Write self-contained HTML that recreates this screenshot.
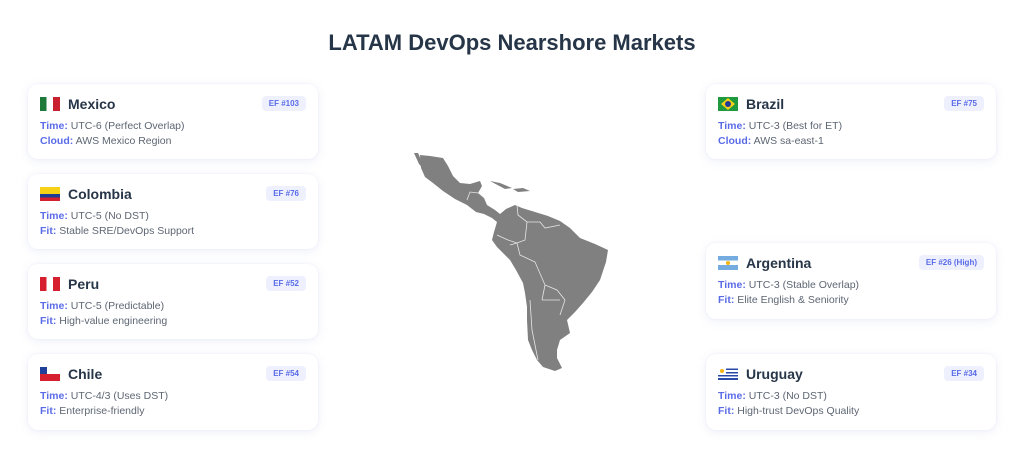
<!DOCTYPE html>
<html><head><style>
*{margin:0;padding:0;box-sizing:border-box}
body{width:1024px;height:457px;background:#fff;font-family:"Liberation Sans",sans-serif;position:relative;overflow:hidden}
h1{position:absolute;top:30px;left:0;width:1024px;text-align:center;font-size:22px;font-weight:bold;color:#263547}
.card{position:absolute;width:290px;background:#fff;border-radius:10px;box-shadow:0 2px 10px rgba(90,100,200,.10),0 0 2px rgba(90,100,200,.08)}
.hd{position:absolute;left:12px;top:12px;display:flex;align-items:center}
.flag{width:20px;height:14px;margin-right:8px;position:relative;overflow:hidden}
.nm{font-weight:bold;font-size:14px;color:#263547}
.badge{position:absolute;right:12px;top:12px;background:#eef1fd;color:#5a6be8;font-size:8px;font-weight:bold;padding:3px 7px;border-radius:4px}
.ln{position:absolute;left:12px;font-size:10.5px;color:#5d6673}
.ln b{color:#5a6be8}
.l1{top:36px}.l2{top:51px}
</style></head><body>
<h1>LATAM DevOps Nearshore Markets</h1>

<div class="card" style="left:28px;top:84px;height:75px">
<div class="hd"><div class="flag" style="background:linear-gradient(90deg,#1f7a3a 33%,#fff 33% 66%,#c8202f 66%)"></div><span class="nm">Mexico</span></div>
<div class="badge">EF #103</div>
<div class="ln l1"><b>Time:</b> UTC-6 (Perfect Overlap)</div><div class="ln l2"><b>Cloud:</b> AWS Mexico Region</div></div>

<div class="card" style="left:28px;top:174px;height:75px">
<div class="hd"><div class="flag" style="background:linear-gradient(#f7d116 50%,#1e3b96 50% 75%,#d3202c 75%)"></div><span class="nm">Colombia</span></div>
<div class="badge">EF #76</div>
<div class="ln l1"><b>Time:</b> UTC-5 (No DST)</div><div class="ln l2"><b>Fit:</b> Stable SRE/DevOps Support</div></div>

<div class="card" style="left:28px;top:264px;height:75px">
<div class="hd"><div class="flag" style="background:linear-gradient(90deg,#d7202f 33%,#fff 33% 66%,#d7202f 66%)"></div><span class="nm">Peru</span></div>
<div class="badge">EF #52</div>
<div class="ln l1"><b>Time:</b> UTC-5 (Predictable)</div><div class="ln l2"><b>Fit:</b> High-value engineering</div></div>

<div class="card" style="left:28px;top:354px;height:76px">
<div class="hd"><div class="flag" style="background:linear-gradient(#fff 50%,#d7202f 50%)"><div style="position:absolute;left:0;top:0;width:7px;height:7px;background:#1f3f9a"></div></div><span class="nm">Chile</span></div>
<div class="badge">EF #54</div>
<div class="ln l1"><b>Time:</b> UTC-4/3 (Uses DST)</div><div class="ln l2"><b>Fit:</b> Enterprise-friendly</div></div>

<div class="card" style="left:706px;top:84px;height:75px">
<div class="hd"><div class="flag" style="background:#1f9a3f"><div style="position:absolute;left:3px;top:1px;width:14px;height:12px;background:#f7d116;clip-path:polygon(50% 0,100% 50%,50% 100%,0 50%)"></div><div style="position:absolute;left:7px;top:4px;width:6px;height:6px;border-radius:50%;background:#1e3b96"></div></div><span class="nm">Brazil</span></div>
<div class="badge">EF #75</div>
<div class="ln l1"><b>Time:</b> UTC-3 (Best for ET)</div><div class="ln l2"><b>Cloud:</b> AWS sa-east-1</div></div>

<div class="card" style="left:706px;top:243px;height:76px">
<div class="hd"><div class="flag" style="background:linear-gradient(#74acdf 33%,#fff 33% 66%,#74acdf 66%)"><div style="position:absolute;left:8px;top:5px;width:4px;height:4px;border-radius:50%;background:#f6b40e"></div></div><span class="nm">Argentina</span></div>
<div class="badge">EF #26 (High)</div>
<div class="ln l1"><b>Time:</b> UTC-3 (Stable Overlap)</div><div class="ln l2"><b>Fit:</b> Elite English &amp; Seniority</div></div>

<div class="card" style="left:706px;top:354px;height:76px">
<div class="hd"><div class="flag" style="background:repeating-linear-gradient(#fff 0 1.6px,#2a4aa8 1.6px 3.2px)"><div style="position:absolute;left:0;top:0;width:8px;height:8px;background:#fff"></div><div style="position:absolute;left:2px;top:2px;width:4px;height:4px;border-radius:50%;background:#f6b40e"></div></div><span class="nm">Uruguay</span></div>
<div class="badge">EF #34</div>
<div class="ln l1"><b>Time:</b> UTC-3 (No DST)</div><div class="ln l2"><b>Fit:</b> High-trust DevOps Quality</div></div>

<svg style="position:absolute;left:0;top:0" width="1024" height="457">
<g fill="#808080">
<polygon points="414,153 418,153 422,162 428,170 426,172 419,164"/>
<polygon points="420,155 430,156 443,158 448,166 453,176 460,183 470,184 480,181 482,186 478,193 484,198 487,205 495,210 500,214 506,209 515,205 522,208 535,212 548,216 560,221 570,228 580,238 595,244 608,250 606,262 600,280 592,292 583,303 575,312 567,320 570,333 560,340 557,350 557,358 562,368 555,371 543,367 537,360 532,350 528,340 527,320 527,307 525,293 523,283 516,270 510,260 502,252 497,247 492,240 494,232 497,222 492,218 484,214 476,212 467,205 455,199 443,191 433,183 425,177 421,168"/>
<polygon points="490,181 500,183 512,188 505,189"/>
<polygon points="513,189 523,188 530,191 518,192"/>
</g>
<g fill="none" stroke="#e6e6e6" stroke-width="0.8">
<path d="M467,200 L470,192 L478,193 M517,205 L518,215 L527,222 L540,222 L545,228 L560,225 M527,222 L525,240 L517,243 L510,245 M497,235 L508,240 L517,243 L520,255 L535,262 L545,285 L542,300 M520,255 L535,262 M545,285 L557,290 L565,300 L560,315 M542,300 L560,300 M530,300 L532,330 L538,360"/>
</g>
</svg>
</body></html>
